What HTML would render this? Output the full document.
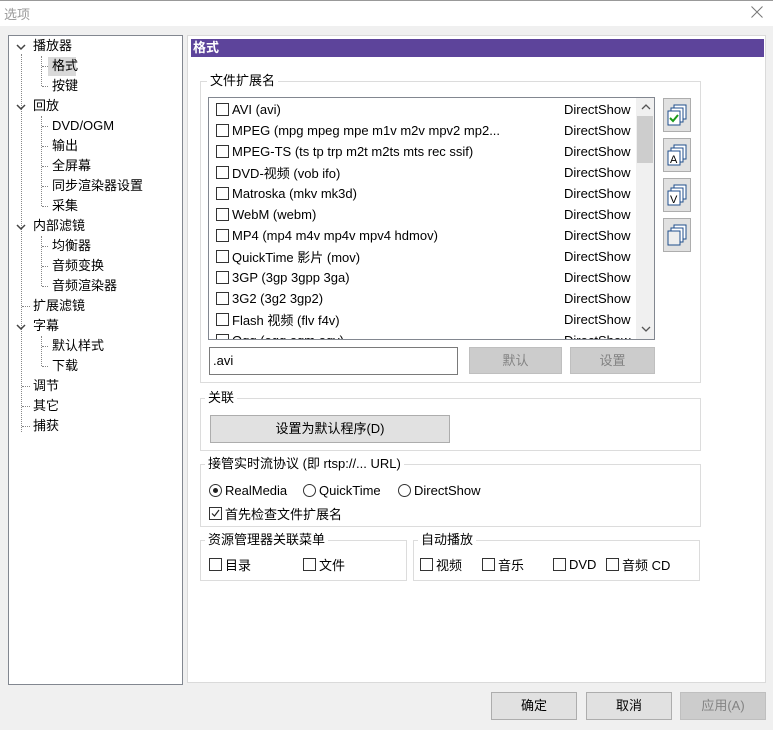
<!DOCTYPE html>
<html><head><meta charset="utf-8"><style>
*{margin:0;padding:0;box-sizing:border-box}
body{width:773px;height:730px;background:#f0f0f0;position:relative;overflow:hidden;font-family:"Liberation Sans","Noto Sans CJK SC",sans-serif;font-size:13px;color:#000}
.a{position:absolute;white-space:nowrap}
.f{position:absolute;white-space:nowrap;display:flex;align-items:center;height:18px}
.grp{position:absolute;border:1px solid #dcdcdc}
.gl{position:absolute;background:#fff;padding:0 3px;line-height:16px;top:-9px;left:6px}
.btn{position:absolute;background:#e1e1e1;border:1px solid #adadad;text-align:center}
.dis{background:#cccccc;border-color:#bfbfbf;color:#838383}
.cb{display:inline-block;flex:none;width:13px;height:13px;border:1px solid #333;background:#fff;margin-right:3px;position:relative}
.rd{display:inline-block;flex:none;width:13px;height:13px;border:1px solid #333;border-radius:50%;background:#fff;margin-right:3px;position:relative}
.row{position:absolute;left:7px;height:21px;width:420px;display:flex;align-items:center}
.row .r{position:absolute;left:348px}
.ib{position:absolute;left:663px;width:28px;height:34px;background:#e1e1e1;border:1px solid #adadad}
.tr{position:absolute;line-height:18px}
.dv{position:absolute;border-left:1px dotted #888}
.dh{position:absolute;border-top:1px dotted #888}
.ch{position:absolute;left:15px}
</style></head><body>
<div class="a" style="left:0;top:0;width:773px;height:1px;background:#999"></div>
<div class="a" style="left:0;top:1px;width:773px;height:25px;background:#fff"></div>
<div class="a" style="left:4px;top:4px;color:#999;font-size:13px">选项</div>
<svg class="a" style="left:751px;top:6px" width="12" height="12"><path d="M0.5 0.5 L11.5 11.5 M11.5 0.5 L0.5 11.5" stroke="#777" stroke-width="1"/></svg>

<!-- tree -->
<div class="a" style="left:8px;top:35px;width:175px;height:650px;background:#fff;border:1px solid #828790"></div>
<div class="dv" style="left:21px;top:54px;height:378px"></div>
<div class="dv" style="left:41px;top:56px;height:30px"></div>
<div class="dv" style="left:41px;top:116px;height:90px"></div>
<div class="dv" style="left:41px;top:236px;height:50px"></div>
<div class="dv" style="left:41px;top:336px;height:30px"></div>
<svg class="ch" style="top:43px" width="12" height="8"><path d="M2 2 L6 6 L10 2" stroke="#444" stroke-width="1.5" fill="none"/></svg>
<svg class="ch" style="top:103px" width="12" height="8"><path d="M2 2 L6 6 L10 2" stroke="#444" stroke-width="1.5" fill="none"/></svg>
<svg class="ch" style="top:223px" width="12" height="8"><path d="M2 2 L6 6 L10 2" stroke="#444" stroke-width="1.5" fill="none"/></svg>
<svg class="ch" style="top:323px" width="12" height="8"><path d="M2 2 L6 6 L10 2" stroke="#444" stroke-width="1.5" fill="none"/></svg>
<div class="a" style="left:48px;top:57px;width:28px;height:19px;background:#d9d9d9"></div>
<div class="tr" style="left:33px;top:37px">播放器</div>
<div class="tr" style="left:52px;top:57px">格式</div>
<div class="tr" style="left:52px;top:77px">按键</div>
<div class="tr" style="left:33px;top:97px">回放</div>
<div class="tr" style="left:52px;top:117px">DVD/OGM</div>
<div class="tr" style="left:52px;top:137px">输出</div>
<div class="tr" style="left:52px;top:157px">全屏幕</div>
<div class="tr" style="left:52px;top:177px">同步渲染器设置</div>
<div class="tr" style="left:52px;top:197px">采集</div>
<div class="tr" style="left:33px;top:217px">内部滤镜</div>
<div class="tr" style="left:52px;top:237px">均衡器</div>
<div class="tr" style="left:52px;top:257px">音频变换</div>
<div class="tr" style="left:52px;top:277px">音频渲染器</div>
<div class="tr" style="left:33px;top:297px">扩展滤镜</div>
<div class="tr" style="left:33px;top:317px">字幕</div>
<div class="tr" style="left:52px;top:337px">默认样式</div>
<div class="tr" style="left:52px;top:357px">下载</div>
<div class="tr" style="left:33px;top:377px">调节</div>
<div class="tr" style="left:33px;top:397px">其它</div>
<div class="tr" style="left:33px;top:417px">捕获</div>
<div class="dh" style="left:42px;top:66px;width:6px"></div><div class="dh" style="left:42px;top:86px;width:6px"></div>
<div class="dh" style="left:42px;top:126px;width:6px"></div><div class="dh" style="left:42px;top:146px;width:6px"></div><div class="dh" style="left:42px;top:166px;width:6px"></div><div class="dh" style="left:42px;top:186px;width:6px"></div><div class="dh" style="left:42px;top:206px;width:6px"></div>
<div class="dh" style="left:42px;top:246px;width:6px"></div><div class="dh" style="left:42px;top:266px;width:6px"></div><div class="dh" style="left:42px;top:286px;width:6px"></div>
<div class="dh" style="left:22px;top:306px;width:8px"></div>
<div class="dh" style="left:42px;top:346px;width:6px"></div><div class="dh" style="left:42px;top:366px;width:6px"></div>
<div class="dh" style="left:22px;top:386px;width:8px"></div><div class="dh" style="left:22px;top:406px;width:8px"></div><div class="dh" style="left:22px;top:426px;width:8px"></div>

<!-- right panel -->
<div class="a" style="left:187px;top:35px;width:579px;height:648px;background:#fff;border:1px solid #dadada"></div>
<div class="a" style="left:191px;top:39px;width:573px;height:18px;background:#5d449b;color:#fff;font-weight:bold;line-height:18px;padding-left:2px">格式</div>

<div class="grp" style="left:200px;top:81px;width:501px;height:302px"><div class="gl">文件扩展名</div></div>
<div class="a" style="left:208px;top:97px;width:447px;height:243px;border:1px solid #828790;background:#fff;overflow:hidden">
<div class="row" style="top:1px"><span class="cb"></span>AVI (avi)<span class="r">DirectShow</span></div>
<div class="row" style="top:22px"><span class="cb"></span>MPEG (mpg mpeg mpe m1v m2v mpv2 mp2...<span class="r">DirectShow</span></div>
<div class="row" style="top:43px"><span class="cb"></span>MPEG-TS (ts tp trp m2t m2ts mts rec ssif)<span class="r">DirectShow</span></div>
<div class="row" style="top:64px"><span class="cb"></span>DVD-视频 (vob ifo)<span class="r">DirectShow</span></div>
<div class="row" style="top:85px"><span class="cb"></span>Matroska (mkv mk3d)<span class="r">DirectShow</span></div>
<div class="row" style="top:106px"><span class="cb"></span>WebM (webm)<span class="r">DirectShow</span></div>
<div class="row" style="top:127px"><span class="cb"></span>MP4 (mp4 m4v mp4v mpv4 hdmov)<span class="r">DirectShow</span></div>
<div class="row" style="top:148px"><span class="cb"></span>QuickTime 影片 (mov)<span class="r">DirectShow</span></div>
<div class="row" style="top:169px"><span class="cb"></span>3GP (3gp 3gpp 3ga)<span class="r">DirectShow</span></div>
<div class="row" style="top:190px"><span class="cb"></span>3G2 (3g2 3gp2)<span class="r">DirectShow</span></div>
<div class="row" style="top:211px"><span class="cb"></span>Flash 视频 (flv f4v)<span class="r">DirectShow</span></div>
<div class="row" style="top:232px"><span class="cb"></span>Ogg (ogg ogm ogv)<span class="r">DirectShow</span></div>
<div class="a" style="left:427px;top:0;width:18px;height:241px;background:#f0f0f0"></div>
<div class="a" style="left:428px;top:18px;width:16px;height:47px;background:#cdcdcd"></div>
<svg class="a" style="left:432px;top:6px" width="10" height="6"><path d="M1 5 L5 1 L9 5" stroke="#555" stroke-width="1.3" fill="none"/></svg>
<svg class="a" style="left:432px;top:228px" width="10" height="6"><path d="M1 1 L5 5 L9 1" stroke="#555" stroke-width="1.3" fill="none"/></svg>
</div>
<div class="a" style="left:209px;top:347px;width:249px;height:28px;border:1px solid #7a7a7a;background:#fff;padding:3px 3px;line-height:20px">.avi</div>
<div class="btn dis" style="left:469px;top:347px;width:93px;height:27px;line-height:25px">默认</div>
<div class="btn dis" style="left:570px;top:347px;width:85px;height:27px;line-height:25px">设置</div>

<div class="ib" style="top:98px"><svg width="26" height="32"><rect x="10" y="6" width="12" height="14" fill="#fff" stroke="#1f4e8c"/><rect x="7" y="9" width="12" height="14" fill="#fff" stroke="#1f4e8c"/><rect x="4" y="12" width="12" height="14" fill="#fff" stroke="#1f4e8c"/><path d="M6 19 l3 3 l5 -6" stroke="#1a9a1a" stroke-width="2" fill="none"/></svg></div>
<div class="ib" style="top:138px"><svg width="26" height="32"><rect x="10" y="6" width="12" height="14" fill="#fff" stroke="#1f4e8c"/><rect x="7" y="9" width="12" height="14" fill="#fff" stroke="#1f4e8c"/><rect x="4" y="12" width="12" height="14" fill="#fff" stroke="#1f4e8c"/><text x="6" y="24" font-size="11" font-family="Liberation Sans">A</text></svg></div>
<div class="ib" style="top:178px"><svg width="26" height="32"><rect x="10" y="6" width="12" height="14" fill="#fff" stroke="#1f4e8c"/><rect x="7" y="9" width="12" height="14" fill="#fff" stroke="#1f4e8c"/><rect x="4" y="12" width="12" height="14" fill="#fff" stroke="#1f4e8c"/><text x="6" y="24" font-size="11" font-family="Liberation Sans">V</text></svg></div>
<div class="ib" style="top:218px"><svg width="26" height="32"><rect x="10" y="6" width="12" height="14" fill="#fff" stroke="#1f4e8c"/><rect x="7" y="9" width="12" height="14" fill="#fff" stroke="#1f4e8c"/><rect x="4" y="12" width="12" height="14" fill="#eee" stroke="#1f4e8c"/></svg></div>

<div class="grp" style="left:200px;top:398px;width:501px;height:53px"><div class="gl" style="left:4px">关联</div></div>
<div class="btn" style="left:210px;top:415px;width:240px;height:28px;line-height:26px">设置为默认程序(D)</div>

<div class="grp" style="left:200px;top:464px;width:501px;height:63px"><div class="gl" style="left:4px">接管实时流协议 (即 rtsp://... URL)</div></div>
<div class="f" style="left:209px;top:481px"><span class="rd"><span style="position:absolute;left:3px;top:3px;width:5px;height:5px;border-radius:50%;background:#222"></span></span>RealMedia</div>
<div class="f" style="left:303px;top:481px"><span class="rd"></span>QuickTime</div>
<div class="f" style="left:398px;top:481px"><span class="rd"></span>DirectShow</div>
<div class="f" style="left:209px;top:504px"><span class="cb"><svg width="11" height="11" style="position:absolute;left:0;top:0"><path d="M2 5.5 l2.5 2.5 l4.5 -6" stroke="#222" stroke-width="1.2" fill="none"/></svg></span>首先检查文件扩展名</div>

<div class="grp" style="left:200px;top:540px;width:207px;height:41px"><div class="gl" style="left:4px">资源管理器关联菜单</div></div>
<div class="f" style="left:209px;top:555px"><span class="cb"></span>目录</div>
<div class="f" style="left:303px;top:555px"><span class="cb"></span>文件</div>
<div class="grp" style="left:413px;top:540px;width:287px;height:41px"><div class="gl" style="left:4px">自动播放</div></div>
<div class="f" style="left:420px;top:555px"><span class="cb"></span>视频</div>
<div class="f" style="left:482px;top:555px"><span class="cb"></span>音乐</div>
<div class="f" style="left:553px;top:555px"><span class="cb"></span>DVD</div>
<div class="f" style="left:606px;top:555px"><span class="cb"></span>音频 CD</div>

<div class="btn" style="left:491px;top:692px;width:86px;height:28px;line-height:26px">确定</div>
<div class="btn" style="left:586px;top:692px;width:86px;height:28px;line-height:26px">取消</div>
<div class="btn dis" style="left:680px;top:692px;width:86px;height:28px;line-height:26px">应用(A)</div>
</body></html>
